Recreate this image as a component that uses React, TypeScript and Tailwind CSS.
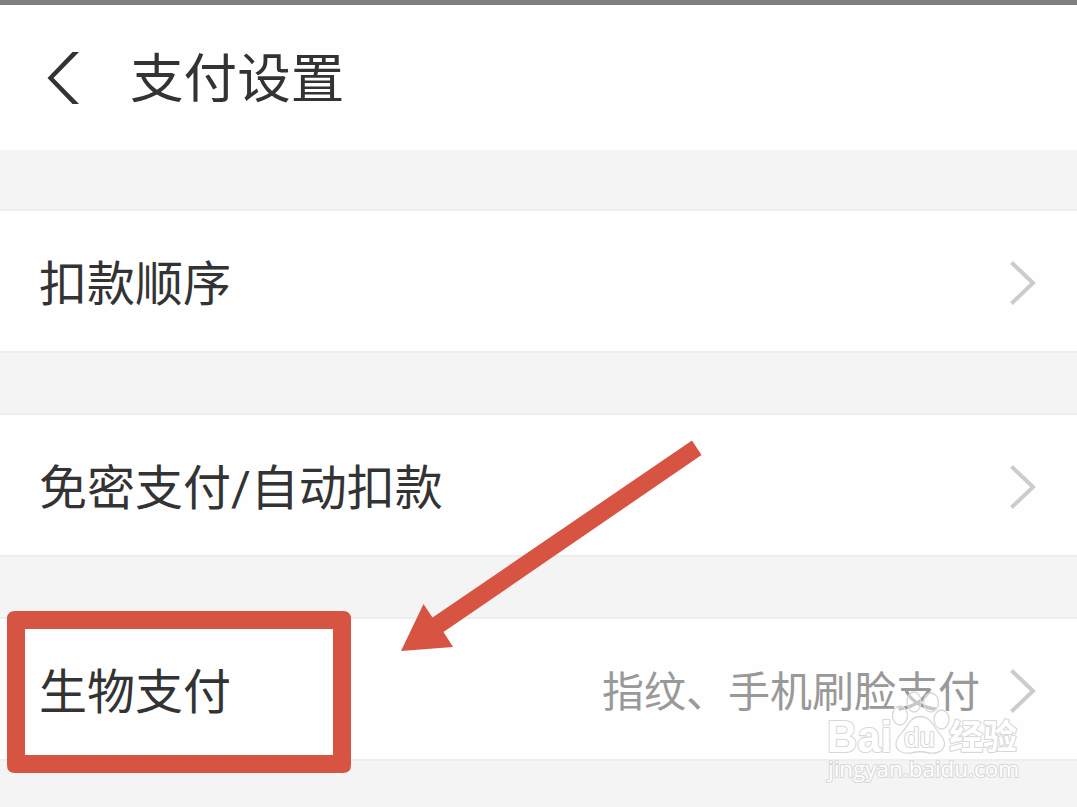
import React from 'react';

const ChevronRight: React.FC = () => (
  <svg className="h-[44px] w-[26px] shrink-0" viewBox="0 0 26 44" fill="none" stroke="#cccccc" strokeWidth="4">
    <path d="M1.5 1.5 L23 22 L1.5 42.5" />
  </svg>
);

const SettingRow: React.FC<{ title: React.ReactNode; value?: string; className: string }> = ({ title, value, className }) => (
  <button className={`flex w-full items-center border-y-2 border-[#eeeeee] bg-[#fefefe] pl-[39px] pr-[41px] text-left ${className}`}>
    <span className="-mt-[3px] text-[48px] leading-[70px] text-[#333333]">{title}</span>
    {value && <span className="-mt-px ml-auto text-[42px] leading-[60px] text-[#999999]">{value}</span>}
    <span className={value ? 'ml-[30px] pt-[4px]' : 'ml-auto pt-[4px]'}>
      <ChevronRight />
    </span>
  </button>
);

// Red frame and arrow pointing at the biometric payment row
const Highlight: React.FC = () => (
  <svg className="pointer-events-none absolute left-0 top-0" width="1077" height="807" viewBox="0 0 1077 807">
    <path
      d="M15 611 H343 Q351 611 351 619 V765 Q351 773 343 773 H15 Q7 773 7 765 V619 Q7 611 15 611 Z M25 629 V755 H333 V629 Z"
      fill="#d75442"
      fillRule="evenodd"
    />
    <path d="M401 651 L423.5 604 L432.5 617.5 L692 440.5 L701.5 455 L443.5 632 L453 647 Z" fill="#d75442" />
  </svg>
);

const Watermark: React.FC = () => (
  <svg
    className="pointer-events-none absolute left-[816px] top-[680px]"
    width="214"
    height="112"
    viewBox="816 680 214 112"
    fill="#ffffff"
    stroke="#d8d8d8"
    strokeWidth="1.3"
    strokeLinejoin="round"
  >
    <g fillOpacity="0.45">
      <ellipse cx="900" cy="715.5" rx="7.5" ry="9.5" />
      <ellipse cx="914" cy="702" rx="7" ry="10" />
      <ellipse cx="931" cy="702.5" rx="7.5" ry="9.5" />
      <ellipse cx="941.5" cy="719.5" rx="7.5" ry="9.5" />
    </g>
    <path
      fillOpacity="0.8"
      d="M920 716.5 C911 716.5 908 725 904 730 C900 735 896 738 896 744 C896 751 903 754 911 753 Q920 750.5 929 753 C938 754 944.5 751 944.5 743 C944 737 939 734 936 729 C932 723 929 716.5 920 716.5 Z"
    />
    <g className="[paint-order:stroke]" strokeWidth="2.2">
      <text x="827" y="751.5" fontSize="44" fontWeight="700" textLength="65" lengthAdjust="spacingAndGlyphs" className="font-['Liberation_Sans',sans-serif]">Bai</text>
      <text x="904" y="746.5" fontSize="27" textLength="31" lengthAdjust="spacingAndGlyphs" className="font-['Liberation_Sans',sans-serif]">du</text>
      <text x="949" y="748.5" fontSize="34" fontWeight="700" textLength="68" className="font-['Liberation_Sans','Noto_Sans_CJK_SC',sans-serif]">经验</text>
      <text x="828" y="777" fontSize="22" textLength="191" lengthAdjust="spacingAndGlyphs" className="font-['Open_Sans',sans-serif]">jingyan.baidu.com</text>
    </g>
  </svg>
);

const App: React.FC = () => (
  <div className="relative flex h-[807px] w-[1077px] flex-col overflow-hidden bg-[#f4f4f4] font-['Noto_Sans_CJK_SC',sans-serif]">
    <div className="h-[5px] bg-[#7f7f7f]" />
    <header className="flex h-[145px] items-center bg-[#fefefe] pl-[47px]">
      <svg className="h-[52px] w-[33px]" viewBox="0 0 33 52" fill="#333333">
        <path d="M25.5 0 H32 L6.5 26 L32 52 H25.5 L0.5 26 Z" />
      </svg>
      <h1 className="-mt-[6px] ml-[50px] text-[53.6px] leading-[78px] text-[#333333]">支付设置</h1>
    </header>
    <main>
      <SettingRow title="扣款顺序" className="mt-[59px] h-[144px]" />
      <SettingRow
        title={<>免密支付<span className="font-['Roboto',sans-serif] leading-none">/</span>自动扣款</>}
        className="mt-[60px] h-[144px]"
      />
      <SettingRow title="生物支付" value="指纹、手机刷脸支付" className="mt-[60px] h-[144px]" />
    </main>
    <Highlight />
    <Watermark />
  </div>
);

export default App;
